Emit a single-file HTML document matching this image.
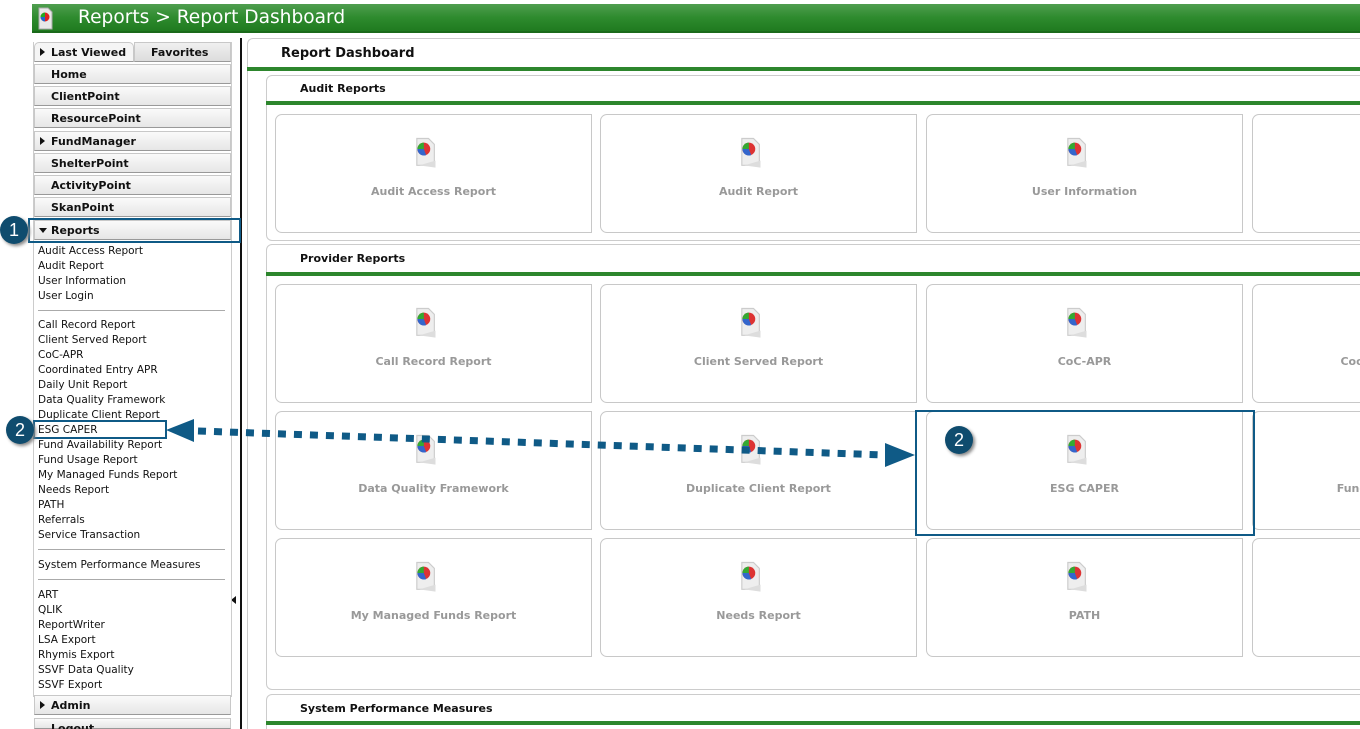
<!DOCTYPE html><html><head><style>
*{margin:0;padding:0;box-sizing:border-box}
html,body{width:1360px;height:729px;overflow:hidden}
body{background:#fff;font-family:"DejaVu Sans","Liberation Sans",sans-serif;position:relative}
.abs{position:absolute}
#hdr{left:32px;top:4px;width:1328px;height:29px;background:linear-gradient(#4f9e4f,#2e8b2e 50%,#1f7a1f);border-bottom:2px solid #1a6a1a}
#hdr span{position:absolute;left:46px;top:3px;color:#fff;font-size:18.6px;font-family:"DejaVu Sans",sans-serif}
.btn{position:absolute;left:34px;width:197px;height:20px;background:linear-gradient(#fafafa,#e6e6e6);border:1px solid #c8c8c8;border-bottom:1px solid #999;font-weight:bold;font-size:11px;padding:3px 0 0 16px;color:#111}
.tri{position:absolute;left:5px;top:5px;width:0;height:0;border-left:5px solid #111;border-top:4px solid transparent;border-bottom:4px solid transparent}
.tdn{position:absolute;left:4px;top:7px;border-top:5px solid #111;border-left:4px solid transparent;border-right:4px solid transparent}
.it{position:absolute;left:38px;font-size:10.5px;color:#111;white-space:nowrap}
.sep{position:absolute;left:38px;width:187px;height:1px;background:#aaa}
.sec{position:absolute;left:266px;width:1100px;border:1px solid #ccc;border-radius:6px 0 0 6px}
.sh{position:absolute;left:33px;font-size:11px;font-weight:bold;color:#111}
.gl{position:absolute;left:-1px;right:0;height:4px;background:#2d862d}
.tile{position:absolute;width:317px;height:119px;border:1px solid #c8c8c8;border-radius:7px;background:#fff}
.tile .lb{position:absolute;left:0;right:0;top:70px;text-align:center;font-size:11px;font-weight:bold;color:#999;white-space:nowrap}
.ic{position:absolute;left:136px;top:20px;width:26px;height:35px}
.circ{position:absolute;width:28px;height:28px;border-radius:50%;background:#0f4c6e;color:#fff;font-size:18px;text-align:center;line-height:28px;font-family:"Liberation Sans",sans-serif;box-shadow:2px 2px 3px #888}
.box{position:absolute;border:2px solid #0f5a86}
</style></head><body>
<div id="hdr" class="abs"><span>Reports &gt; Report Dashboard</span></div>
<svg class="abs" style="left:36px;top:6px" width="18" height="25"><path d="M3 2h9l4 4v17H3z" fill="#e8e8e8" stroke="#aaa"/><circle cx="9" cy="11" r="4.5" fill="#d22"/><path d="M9 11V6.5A4.5 4.5 0 0 0 4.5 11z" fill="#2a2"/><path d="M9 11H4.5A4.5 4.5 0 0 0 9 15.5z" fill="#26c"/></svg>

<div class="abs" style="left:240px;top:38px;width:2px;height:691px;background:#111"></div>
<div class="abs" style="left:231px;top:596px;border-right:5px solid #111;border-top:4px solid transparent;border-bottom:4px solid transparent"></div>
<div class="abs" style="left:33px;top:42px;width:199px;height:655px;border:1px solid #ccc;border-top:none"></div>

<div class="btn" style="top:42px;width:100px;border-radius:5px 5px 0 0;background:#f5f5f5"><div class="tri"></div>Last Viewed</div>
<div class="btn" style="top:42px;left:134px;width:97px;background:linear-gradient(#f0f0f0,#dcdcdc);padding-left:16px">Favorites</div>
<div class="btn" style="top:64px">Home</div>
<div class="btn" style="top:86px">ClientPoint</div>
<div class="btn" style="top:108px">ResourcePoint</div>
<div class="btn" style="top:131px"><div class="tri"></div>FundManager</div>
<div class="btn" style="top:153px">ShelterPoint</div>
<div class="btn" style="top:175px">ActivityPoint</div>
<div class="btn" style="top:197px">SkanPoint</div>
<div class="btn" style="top:220px"><div class="tdn"></div>Reports</div>

<div class="it" style="top:245px">Audit Access Report</div>
<div class="it" style="top:260px">Audit Report</div>
<div class="it" style="top:275px">User Information</div>
<div class="it" style="top:290px">User Login</div>
<div class="sep" style="top:310px"></div>
<div class="it" style="top:319px">Call Record Report</div>
<div class="it" style="top:334px">Client Served Report</div>
<div class="it" style="top:349px">CoC-APR</div>
<div class="it" style="top:364px">Coordinated Entry APR</div>
<div class="it" style="top:379px">Daily Unit Report</div>
<div class="it" style="top:394px">Data Quality Framework</div>
<div class="it" style="top:409px">Duplicate Client Report</div>
<div class="it" style="top:424px">ESG CAPER</div>
<div class="it" style="top:439px">Fund Availability Report</div>
<div class="it" style="top:454px">Fund Usage Report</div>
<div class="it" style="top:469px">My Managed Funds Report</div>
<div class="it" style="top:484px">Needs Report</div>
<div class="it" style="top:499px">PATH</div>
<div class="it" style="top:514px">Referrals</div>
<div class="it" style="top:529px">Service Transaction</div>
<div class="sep" style="top:549px"></div>
<div class="it" style="top:559px">System Performance Measures</div>
<div class="sep" style="top:579px"></div>
<div class="it" style="top:589px">ART</div>
<div class="it" style="top:604px">QLIK</div>
<div class="it" style="top:619px">ReportWriter</div>
<div class="it" style="top:634px">LSA Export</div>
<div class="it" style="top:649px">Rhymis Export</div>
<div class="it" style="top:664px">SSVF Data Quality</div>
<div class="it" style="top:679px">SSVF Export</div>
<div class="btn" style="top:695px"><div class="tri"></div>Admin</div>
<div class="btn" style="top:718px;height:11px">Logout</div>

<div class="abs" style="left:247px;top:38px;width:1113px;height:691px;border:1px solid #ccc;border-right:none;border-bottom:none;border-radius:6px 0 0 0"></div>
<div class="abs" style="left:281px;top:46px;font-size:13px;font-weight:bold;color:#111">Report Dashboard</div>
<div class="abs" style="left:247px;top:67px;width:1113px;height:4px;background:#2d862d"></div>

<div class="sec" style="top:75px;height:166px"><div class="sh" style="top:6px">Audit Reports</div><div class="gl" style="top:25px"></div></div>
<div class="sec" style="top:244px;height:446px"><div class="sh" style="top:7px">Provider Reports</div><div class="gl" style="top:27px"></div></div>
<div class="sec" style="top:694px;height:35px;border-bottom:none;border-radius:6px 0 0 0"><div class="sh" style="top:7px">System Performance Measures</div><div class="gl" style="top:26px"></div></div>

<div id="tiles"></div>
<script>
var cols=[275,600,926,1252],rows=[[114,["Audit Access Report","Audit Report","User Information",""]],[284,["Call Record Report","Client Served Report","CoC-APR","Coordinated Entry APR"]],[411,["Data Quality Framework","Duplicate Client Report","ESG CAPER","Fund Availability Report"]],[538,["My Managed Funds Report","Needs Report","PATH",""]]];
var ic='<svg class="ic" viewBox="0 0 22 30"><path d="M4 3h10l5 5v18H4z" fill="#eee" stroke="#ccc"/><path d="M6 26l14-4v6z" fill="#ddd"/><circle cx="10" cy="12" r="5.5" fill="#d33"/><path d="M10 12V6.5A5.5 5.5 0 0 0 4.5 12z" fill="#3a3"/><path d="M10 12H4.5A5.5 5.5 0 0 0 12 17.2z" fill="#36c"/></svg>';
var h='';rows.forEach(function(r){cols.forEach(function(x,i){var w=(x==1252)?108:317;h+='<div class="tile" style="left:'+x+'px;top:'+r[0]+'px;width:'+w+'px;border-radius:7px 0 0 7px;'+(x==1252?'border-right:none;':'')+'">'+(x==1252?'':ic)+'<div class="lb" style="'+(x==1252?'left:0;right:auto;width:317px;':'')+'">'+r[1][i]+'</div></div>';});});
document.getElementById('tiles').innerHTML=h;
</script>

<div class="box" style="left:28px;top:218px;width:213px;height:25px"></div>
<div class="circ" style="left:0;top:216px">1</div>
<div class="box" style="left:33px;top:420px;width:134px;height:19px"></div>
<div class="circ" style="left:6px;top:416px">2</div>
<svg class="abs" style="left:160px;top:415px" width="770" height="60">
<path d="M6 15L34 4V27z" fill="#0f5a86"/>
<line x1="38" y1="16" x2="725" y2="40" stroke="#0f5a86" stroke-width="7" stroke-dasharray="8 8"/>
<path d="M755 40L725 28V52z" fill="#0f5a86"/>
</svg>
<div class="box" style="left:915px;top:410px;width:340px;height:126px"></div>
<div class="circ" style="left:945px;top:426px">2</div>
</body></html>
